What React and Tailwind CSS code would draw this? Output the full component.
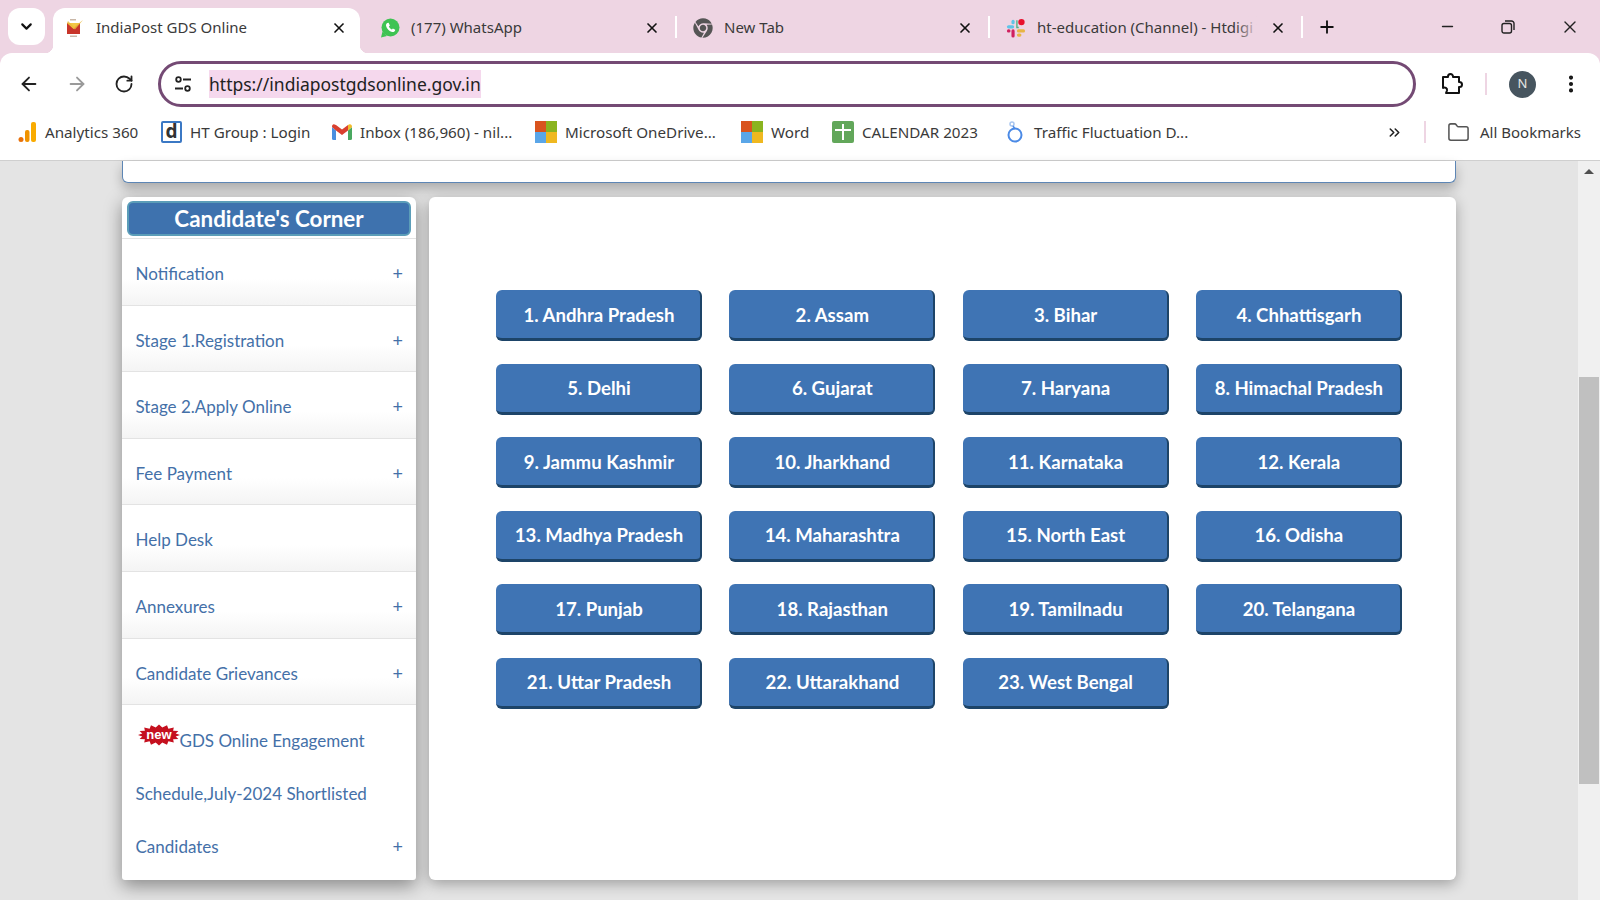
import React from 'react';
import { ArrowLeft, ArrowRight, RotateCw, EllipsisVertical, ChevronDown, X, Plus, Minus, Folder, ChevronsRight } from 'lucide-react';
import { FaChrome } from 'react-icons/fa';

const menuItems = [
  { label: 'Notification', plus: true },
  { label: 'Stage 1.Registration', plus: true },
  { label: 'Stage 2.Apply Online', plus: true },
  { label: 'Fee Payment', plus: true },
  { label: 'Help Desk', plus: false },
  { label: 'Annexures', plus: true },
  { label: 'Candidate Grievances', plus: true },
];

const states = [
  '1. Andhra Pradesh', '2. Assam', '3. Bihar', '4. Chhattisgarh',
  '5. Delhi', '6. Gujarat', '7. Haryana', '8. Himachal Pradesh',
  '9. Jammu Kashmir', '10. Jharkhand', '11. Karnataka', '12. Kerala',
  '13. Madhya Pradesh', '14. Maharashtra', '15. North East', '16. Odisha',
  '17. Punjab', '18. Rajasthan', '19. Tamilnadu', '20. Telangana',
  '21. Uttar Pradesh', '22. Uttarakhand', '23. West Bengal',
];

const burstPoints = Array.from({ length: 32 }, (_, i) => {
  const angle = (i / 32) * Math.PI * 2;
  const rx = i % 2 === 0 ? 21 : 17;
  const ry = i % 2 === 0 ? 10.5 : 7.5;
  return `${(21 + rx * Math.cos(angle)).toFixed(1)},${(11 + ry * Math.sin(angle)).toFixed(1)}`;
}).join(' ');

const IndiaPostIcon = () => (
  <svg width="20" height="20" viewBox="0 0 20 20">
    <rect x="2" y="5" width="13" height="11" fill="#c8352a" />
    <path d="M2 5l6.500 6L15 5z" fill="#f3c744" />
    <path d="M3 3l6 6 9-7-8 9.500L2 5z" fill="#e9b93a" opacity="0.8" />
    <rect x="5" y="1" width="6" height="1.500" fill="#c9b7a8" />
    <rect x="5" y="17.500" width="7" height="1.500" fill="#c9b7a8" />
  </svg>
);

const WhatsAppIcon = () => (
  <svg width="20" height="20" viewBox="0 0 20 20">
    <circle cx="10.500" cy="9.500" r="9" fill="#3fc353" />
    <path d="M1 19.500l1.500-6 4.500 4.500z" fill="#3fc353" />
    <path d="M7.300 5c-1 .6-1.500 1.600-1.200 2.900.6 2.800 3.200 5.400 6 6 1.300.3 2.300-.2 2.900-1.200l.2-1-2.300-1.300-1 1c-1.300-.5-2.500-1.700-3-3l1-1L8.600 4.800z" fill="#fff" />
  </svg>
);

const SlackIcon = () => (
  <svg width="22" height="22" viewBox="0 0 22 22">
    <rect x="1" y="8" width="8" height="3.500" rx="1.750" fill="#5fc4e8" />
    <rect x="6" y="2" width="3.500" height="5" rx="1.750" fill="#5fc4e8" />
    <path d="M12 2.500v8h2" fill="none" stroke="#4fb286" strokeWidth="1.500" />
    <circle cx="17" cy="4.500" r="3.500" fill="#e8112d" />
    <rect x="12" y="12.500" width="9" height="3.500" rx="1.750" fill="#e8b544" />
    <rect x="12" y="17" width="5" height="3.500" rx="1.750" fill="#e8b544" />
    <rect x="1" y="12.500" width="4" height="3.500" rx="1.750" fill="#d0215f" />
    <rect x="6" y="12.500" width="3.500" height="9" rx="1.750" fill="#d0215f" />
  </svg>
);

const AnalyticsIcon = () => (
  <svg width="18" height="22" viewBox="0 0 18 22">
    <circle cx="3" cy="18.500" r="2.500" fill="#e8710a" />
    <rect x="7" y="9" width="4.500" height="12" rx="2" fill="#f09300" />
    <rect x="13" y="1" width="5" height="20" rx="2" fill="#f9ab00" />
  </svg>
);

const GmailIcon = () => (
  <svg width="20" height="16" viewBox="0 0 20 16">
    <path d="M0 3v11.500A1.500 1.500 0 0 0 1.500 16H4V6.500z" fill="#4a8fe0" />
    <path d="M20 3v11.500a1.500 1.500 0 0 1-1.500 1.500H16V6.500z" fill="#49a860" />
    <path d="M0 3l4 3.500L10 11l6-4.500V1l-6 4.500L4 1 2.500.500C1 0 0 1 0 3z" fill="#d9402f" />
    <path d="M16 1l1.500-.700C19 0 20 1 20 3l-4 3.500z" fill="#f2bc2c" />
  </svg>
);

const MicrosoftIcon = () => (
  <span className="grid h-[22px] w-[22px] grid-cols-2 grid-rows-2">
    <span className="bg-[#d9541e]" />
    <span className="bg-[#8ab41f]" />
    <span className="bg-[#5aa6e8]" />
    <span className="bg-[#efb820]" />
  </span>
);

const CalendarIcon = () => (
  <svg width="22" height="22" viewBox="0 0 22 22">
    <rect width="22" height="22" rx="2" fill="#62a75a" />
    <rect x="3" y="8" width="16" height="2" fill="#fff" />
    <rect x="10" y="3" width="2" height="16" fill="#fff" />
  </svg>
);

const TrafficIcon = () => (
  <svg width="20" height="24" viewBox="0 0 20 24">
    <circle cx="10" cy="15" r="6.500" fill="none" stroke="#4b8ae6" strokeWidth="2" />
    <circle cx="7" cy="4" r="2" fill="none" stroke="#a9c6ef" strokeWidth="1.500" />
    <path d="M8 6l2 3" stroke="#4b8ae6" strokeWidth="1.500" />
  </svg>
);

const TuneIcon = () => (
  <svg width="18" height="18" viewBox="0 0 18 18" fill="none" stroke="#222" strokeWidth="1.800">
    <circle cx="4.500" cy="4.500" r="2.300" />
    <path d="M9 4.500h8M1 13.500h8" />
    <circle cx="13.500" cy="13.500" r="2.300" />
  </svg>
);

const PuzzleIcon = () => (
  <svg className="ml-[24px] shrink-0" width="24" height="24" viewBox="0 0 24 24" fill="none" stroke="#111" strokeWidth="2" strokeLinejoin="round">
    <path d="M3 5h5V4.500a2.500 2.500 0 0 1 5 0V5h6v5h.5a2.500 2.500 0 0 1 0 5H19v6H6l1-2.500a2.500 2.500 0 0 0-4-2.500V5z" />
  </svg>
);

const Tab = ({ icon, title, fade }) => (
  <div className="relative flex h-[45px] w-[313px] shrink-0 items-center pb-[6px] pl-4 pr-[17px]">
    <span className="flex w-5 shrink-0 justify-center">{icon}</span>
    <span className="relative ml-[11px] w-[222px] overflow-hidden whitespace-nowrap text-[15px] text-[#3a3a3a]">
      {title}
      {fade && <span className="absolute inset-y-0 right-0 w-6 bg-gradient-to-r from-transparent to-[#eed5e3]" />}
    </span>
    <X className="ml-auto text-[#111]" size={16} strokeWidth={2.5} />
    <span className="absolute right-0 top-[8px] h-[22px] w-[2px] bg-white" />
  </div>
);

const Bookmark = ({ icon, title, className }) => (
  <div className={`flex shrink-0 items-center ${className}`}>
    {icon}
    <span className="whitespace-nowrap text-[15.200px] text-[#3a3a3a]">{title}</span>
  </div>
);

const BrowserChrome = () => (
  <div className="shrink-0 bg-[#eed5e3]">
    <div className="flex h-[53px] items-end pl-2">
      <div className="mb-2 flex h-[37px] w-[37px] items-center justify-center rounded-xl bg-white">
        <ChevronDown className="text-[#111]" size={17} strokeWidth={3} />
      </div>
      <div className="relative ml-2 mr-1 flex h-[45px] w-[307px] items-center rounded-t-xl bg-white pb-[6px] pl-3 pr-[13px]">
        <span className="absolute -left-2 bottom-0 h-2 w-2 bg-[radial-gradient(circle_at_0_0,#eed5e3_8px,#fff_8.500px)]" />
        <span className="absolute -right-2 bottom-0 h-2 w-2 bg-[radial-gradient(circle_at_100%_0,#eed5e3_8px,#fff_8.500px)]" />
        <IndiaPostIcon />
        <span className="ml-[11px] whitespace-nowrap text-[15px] text-[#3a3a3a]">IndiaPost GDS Online</span>
        <X className="ml-auto text-[#111]" size={16} strokeWidth={2.5} />
      </div>
      <Tab icon={<WhatsAppIcon />} title="(177) WhatsApp" />
      <Tab icon={<FaChrome className="text-[#555]" size={20} />} title="New Tab" />
      <Tab icon={<SlackIcon />} title="ht-education (Channel) - Htdigi" fade />
      <div className="mb-2 ml-[14px] flex h-[37px] items-center">
        <Plus className="text-[#111]" size={20} strokeWidth={2.2} />
      </div>
      <div className="mb-2 ml-[102px] flex h-[37px] items-center">
        <Minus className="text-[#222]" size={17} />
      </div>
      <div className="mb-2 ml-[45px] flex h-[37px] items-center">
        <svg width="14" height="14" viewBox="0 0 14 14" fill="none" stroke="#222" strokeWidth="1.400">
          <rect x="1" y="3.500" width="9.500" height="9.500" rx="2" />
          <path d="M4 1h6.500A2.500 2.500 0 0 1 13 3.500V10" />
        </svg>
      </div>
      <div className="mb-2 ml-[45px] flex h-[37px] items-center">
        <X className="text-[#222]" size={20} strokeWidth={1.6} />
      </div>
    </div>
    <div className="rounded-t-xl bg-white">
      <div className="flex h-[55px] items-center pt-[7px]">
        <ArrowLeft className="ml-[18px] text-[#222]" size={22} strokeWidth={2} />
        <ArrowRight className="ml-[26px] text-[#9a9a9a]" size={22} strokeWidth={2} />
        <RotateCw className="ml-[26px] text-[#222]" size={20} strokeWidth={2.2} />
        <div className="ml-[24px] flex h-[46px] w-[1258px] items-center rounded-full border-[3px] border-[#744a74] pl-[13px]">
          <TuneIcon />
          <span className="ml-[17px] bg-[#f5d8ed] py-[2px] text-[17.500px] leading-[24px] text-[#222]">https://indiapostgdsonline.gov.in</span>
        </div>
        <PuzzleIcon />
        <span className="ml-[21px] h-[22px] w-[2px] bg-[#eed5e3]" />
        <span className="ml-[22px] flex h-[27px] w-[27px] items-center justify-center rounded-full bg-[#47555f] text-[13px] text-[#e5e5e5]">N</span>
        <EllipsisVertical className="ml-[24px] text-[#111]" size={22} strokeWidth={2.5} />
      </div>
      <div className="flex h-[53px] items-center border-b border-[#cfcfcf] pb-1 pl-[18px]">
        <Bookmark className="w-[143px] gap-[9px]" icon={<AnalyticsIcon />} title="Analytics 360" />
        <Bookmark
          className="w-[171px] gap-2"
          icon={(
            <span className="flex h-[22px] w-[21px] items-center justify-center rounded-[2px] border-2 border-[#3b78c4] text-[19px] font-bold leading-none text-[#333]">d</span>
          )}
          title="HT Group : Login"
        />
        <Bookmark className="w-[203px] gap-2" icon={<GmailIcon />} title="Inbox (186,960) - nil..." />
        <Bookmark className="w-[206px] gap-2" icon={<MicrosoftIcon />} title="Microsoft OneDrive..." />
        <Bookmark className="w-[91px] gap-2" icon={<MicrosoftIcon />} title="Word" />
        <Bookmark className="w-[173px] gap-2" icon={<CalendarIcon />} title="CALENDAR 2023" />
        <Bookmark className="w-[300px] gap-[9px]" icon={<TrafficIcon />} title="Traffic Fluctuation D..." />
        <ChevronsRight className="ml-[81px] text-[#222]" size={17} strokeWidth={2.2} />
        <span className="ml-[21px] h-[22px] w-[2px] bg-[#eed5e3]" />
        <Folder className="ml-[21px] text-[#555]" size={23} strokeWidth={1.6} />
        <span className="ml-[10px] whitespace-nowrap text-[15px] text-[#3a3a3a]">All Bookmarks</span>
      </div>
    </div>
  </div>
);

const MenuRow = ({ label, plus }) => (
  <div className="flex h-[66.600px] items-center justify-between border-b border-[#e3e3e3] bg-gradient-to-b from-white from-60% to-[#f4f4f4] pl-[13.500px] pr-[13px] pt-1 text-[17px] text-[#4470a8]">
    <span>{label}</span>
    {plus && <span className="text-[18px]">+</span>}
  </div>
);

const Sidebar = () => (
  <div className="h-[683px] w-[294px] shrink-0 overflow-hidden rounded-t-md rounded-b-[3px] bg-white shadow-[0_6px_18px_rgba(0,0,0,0.4)]">
    <div className="px-[5px] pt-1">
      <div className="flex h-[35px] items-center justify-center rounded-md border-2 border-[#5b9db8] bg-[#3e72ae] text-[22.400px] font-bold text-white">
        Candidate's Corner
      </div>
    </div>
    <div className="mt-[2px] border-t border-[#e3e3e3]">
      {menuItems.map((item) => (
        <MenuRow key={item.label} label={item.label} plus={item.plus} />
      ))}
      <div className="pl-[13.500px] pr-[13px] pt-[9px] text-[17px] leading-[53px] text-[#4470a8]">
        <div className="flex h-[53px] items-center">
          <svg className="-mt-3 ml-[2px] shrink-0" width="42" height="22" viewBox="0 0 42 22">
            <polygon points={burstPoints} fill="#c5101f" />
            <text x="21" y="15" textAnchor="middle" fontFamily="Liberation Sans, sans-serif" fontWeight="700" fontSize="13" fill="#fff">new</text>
          </svg>
          <span>GDS Online Engagement</span>
        </div>
        <div>Schedule,July-2024 Shortlisted</div>
        <div className="flex items-center justify-between">
          <span>Candidates</span>
          <span className="text-[18px]">+</span>
        </div>
      </div>
    </div>
  </div>
);

const StateGrid = () => (
  <div className="grid grid-cols-[repeat(4,206px)] gap-x-[27.300px] gap-y-[22.500px]">
    {states.map((name) => (
      <button
        key={name}
        className="h-[51px] rounded-md border-r-2 border-b-[3px] border-[#1d4468] bg-[#3f74b4] pl-[2px] pt-[3px] text-[18.600px] font-bold text-white"
      >
        {name}
      </button>
    ))}
  </div>
);

export default function App() {
  return (
    <div className="flex h-[900px] flex-col overflow-hidden font-['Noto_Sans',sans-serif]">
      <BrowserChrome />
      <div className="flex min-h-0 flex-1 bg-[#e4e4e4]">
        <div className="w-[1578px] pl-[122px] font-['Lato',sans-serif]">
          <div className="h-[22px] w-[1334px] rounded-b-md border-x border-b border-[#5d86b5] bg-white shadow-[0_6px_12px_rgba(0,0,0,0.25)]" />
          <div className="mt-[14px] flex gap-[13px]">
            <Sidebar />
            <div className="h-[683px] w-[1027px] rounded-md bg-white pl-[67px] pt-[93px] shadow-[0_4px_14px_rgba(0,0,0,0.3)]">
              <StateGrid />
            </div>
          </div>
        </div>
        <div className="flex w-[22px] flex-col bg-[#f0f0f0]">
          <div className="flex h-[20px] items-center justify-center">
            <span className="h-0 w-0 border-x-[5px] border-b-[5px] border-x-transparent border-b-[#505050]" />
          </div>
          <div className="ml-px mt-[196px] h-[407px] w-[20px] bg-[#c0c0c0]" />
        </div>
      </div>
    </div>
  );
}
